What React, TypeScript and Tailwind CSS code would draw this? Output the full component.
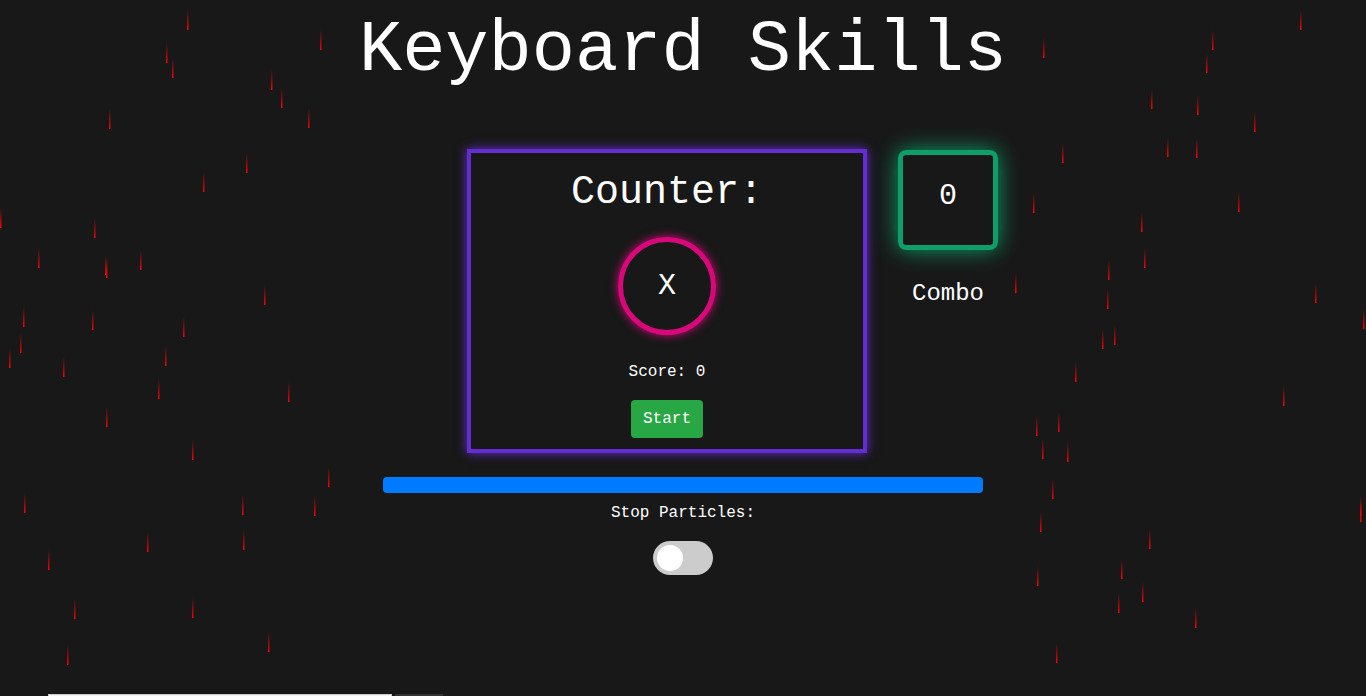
import React from 'react'

// particle streaks: [x, top]
const drops: [number, number][] = [
  [187, 10], [166, 43], [172, 58], [320, 30], [271, 70], [281, 88], [308, 108], [109, 109],
  [246, 153], [203, 172], [0, 208], [94, 218], [38, 248], [105, 255], [106, 258], [140, 250],
  [264, 285], [23, 307], [92, 310], [183, 317], [20, 333], [9, 348], [63, 357], [165, 346],
  [158, 379], [288, 382], [106, 407], [192, 440], [328, 467], [24, 493], [242, 495], [314, 496],
  [147, 532], [243, 530], [48, 550], [74, 599], [192, 598], [268, 632], [67, 645],
  [1300, 10], [1212, 30], [1206, 53], [1043, 38], [1151, 89], [1197, 95], [1254, 112],
  [1062, 143], [1167, 137], [1196, 138], [1033, 193], [1238, 192], [1141, 212], [1144, 248],
  [1108, 260], [1107, 289], [1315, 283], [1363, 309], [1102, 329], [1114, 325], [1015, 273],
  [1075, 362], [1283, 386], [1036, 416], [1058, 412], [1042, 439], [1067, 442], [1052, 479],
  [1360, 496], [1360, 502], [1040, 512], [1149, 529], [1121, 559], [1037, 566], [1142, 582],
  [1118, 593], [1195, 608], [1056, 643],
]

const Particles = () => (
  <svg className="pointer-events-none absolute inset-0 h-full w-full" width="1366" height="696">
    <defs>
      <linearGradient id="drop" x1="0" y1="0" x2="0" y2="1">
        <stop offset="0" stopColor="#ff0000" stopOpacity="0" />
        <stop offset="1" stopColor="#ff0000" />
      </linearGradient>
    </defs>
    {drops.map(([x, y], i) => (
      <rect key={i} x={x} y={y} width="1.5" height="20" fill="url(#drop)" />
    ))}
  </svg>
)

const Toggle = () => (
  <div className="relative h-[34px] w-[60px] rounded-full bg-[#cccccc]">
    <span className="absolute left-1 top-1 h-[26px] w-[26px] rounded-full bg-white" />
  </div>
)

export default function App() {
  return (
    <div className="relative h-screen overflow-hidden bg-[#181818] font-['Liberation_Mono',monospace] text-white">
      <Particles />
      <div className="relative z-10 flex flex-col items-center">
        <h1 className="mt-[15px] text-[72px] leading-none">Keyboard Skills</h1>

        <div className="ml-[99px] mt-[62px] flex items-start gap-[31px]">
          <div className="flex h-[304px] w-[400px] flex-col items-center border-4 border-[#642dd2] shadow-[0_0_10px_#642dd2]">
            <h2 className="mt-[20px] text-[40px] leading-none">Counter:</h2>
            <div className="mt-[24px] flex h-[98px] w-[98px] items-center justify-center rounded-full border-[5px] border-[#d8087a] text-[30px] shadow-[0_0_10px_#d8087a]">
              X
            </div>
            <p className="mt-[25px] text-base leading-6">Score: 0</p>
            <button className="mt-4 rounded bg-[#28a745] px-3 py-[7px] text-base leading-6">Start</button>
          </div>

          <div className="mt-px flex flex-col items-center">
            <div className="flex h-[100px] w-[100px] items-center justify-center rounded-lg border-[5px] border-[#0d9e6a] pb-2 text-[30px] shadow-[0_0_22px_#0d9e6a]">
              0
            </div>
            <p className="mt-[26px] text-2xl leading-9">Combo</p>
          </div>
        </div>

        <div className="mt-6 h-4 w-[600px] rounded bg-[#007bff]" />
        <p className="mt-2 text-base leading-6">Stop Particles:</p>
        <div className="mt-4">
          <Toggle />
        </div>

        <div className="ml-[48px] mt-[119px] flex gap-[3px] self-start">
          <div className="h-8 w-[344px] border border-[#cccccc] bg-[#f5f5f5]" />
          <div className="h-8 w-12 bg-[#333333]" />
        </div>
      </div>
    </div>
  )
}
